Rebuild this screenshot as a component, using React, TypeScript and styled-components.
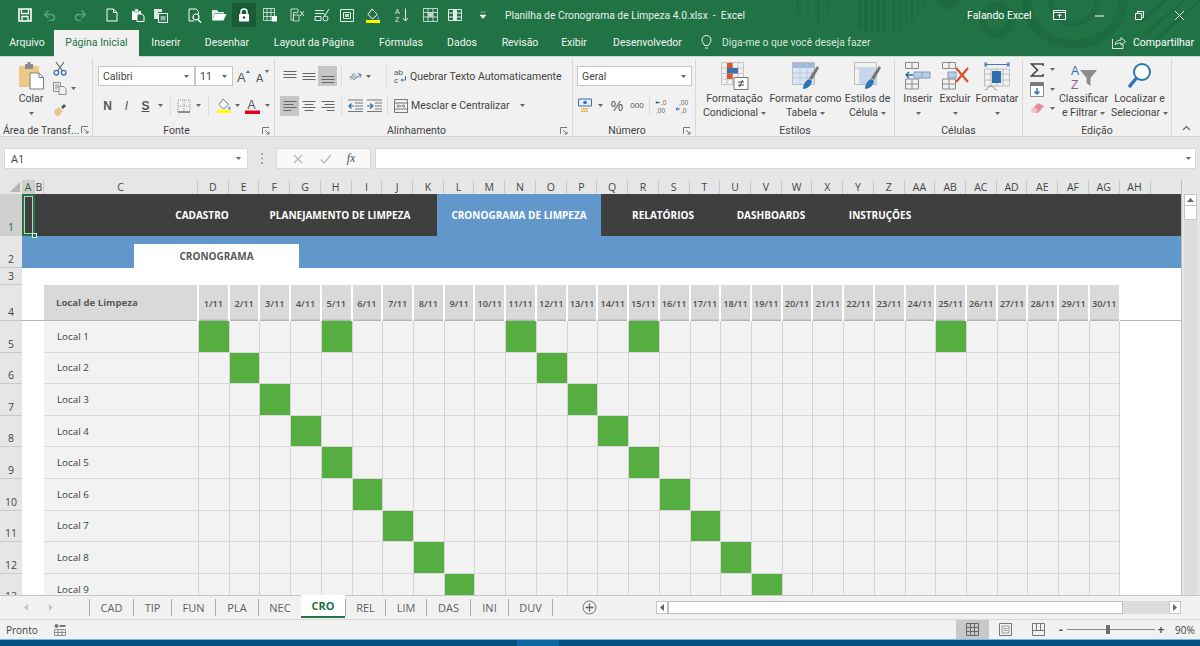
import React from "react";
import styled, { createGlobalStyle } from "styled-components";

const GlobalStyle = createGlobalStyle`
  html, body { margin: 0; padding: 0; background: #e6e6e6; }
  body { width: 1200px; height: 646px; overflow: hidden; font-family: "Open Sans", "Liberation Sans", sans-serif; }
`;

const Page = styled.div`
  width: 1200px;
  height: 646px;
  display: flex;
  flex-direction: column;
  overflow: hidden;
`;

/* ---------- title bar ---------- */
const Head = styled.div`
  position: relative;
  z-index: 1;
  height: 56px;
  flex: none;
  background: #217346;
  color: #fff;
  font-family: "Roboto", "Open Sans", sans-serif;
  font-size: 10.5px;
`;
const Pattern = styled.svg`
  position: absolute;
  right: 0;
  top: 0;
`;
const TitleRow = styled.div`
  position: relative;
  height: 30px;
  display: flex;
  align-items: center;
  padding-left: 15px;
`;
const Qat = styled.div<{ $w?: number; $ml?: number; $on?: boolean }>`
  width: ${(p) => p.$w || 20}px;
  margin-left: ${(p) => p.$ml || 0}px;
  height: 24px;
  display: flex;
  align-items: center;
  justify-content: center;
  flex: none;
  background: ${(p) => (p.$on ? "#1a5c38" : "transparent")};
`;
const DocTitle = styled.div`
  width: 474px;
  flex: none;
  box-sizing: border-box;
  padding-left: 12px;
  color: #e6f1ea;
  font-size: 10.3px;
  white-space: pre;
`;
const UserName = styled.div`
  width: 68px;
  flex: none;
`;
const WinBtn = styled.div<{ $w: number }>`
  width: ${(p) => p.$w}px;
  flex: none;
  display: flex;
  justify-content: center;
`;
const TabRow = styled.div`
  position: relative;
  height: 26px;
  display: flex;
  align-items: flex-start;
`;
const RibbonTab = styled.div<{ $w: number; $on?: boolean }>`
  width: ${(p) => p.$w}px;
  height: ${(p) => (p.$on ? 27 : 26)}px;
  line-height: 25px;
  text-align: center;
  white-space: nowrap;
  flex: none;
  color: ${(p) => (p.$on ? "#217346" : "#eef5f0")};
  background: ${(p) => (p.$on ? "#f1f1f1" : "transparent")};
`;
const TellMe = styled.div`
  width: 414px;
  flex: none;
  display: flex;
  align-items: center;
  gap: 10px;
  height: 25px;
  padding-left: 3px;
  box-sizing: border-box;
  color: #d6e6dc;
  font-size: 10.3px;
`;
const Share = styled.div`
  display: flex;
  align-items: center;
  gap: 7px;
  height: 25px;
`;

/* ---------- ribbon ---------- */
const Ribbon = styled.div`
  height: 81px;
  flex: none;
  display: flex;
  background: #f1f1f1;
  border-top: 1px solid #c5dfcf;
  border-bottom: 1px solid #d2d2d2;
  box-sizing: border-box;
  color: #444;
  font-family: "Roboto", "Open Sans", sans-serif;
  font-size: 10.5px;
`;
const Group = styled.div<{ $w: number }>`
  width: ${(p) => p.$w}px;
  flex: none;
  display: flex;
  flex-direction: column;
  box-sizing: border-box;
  margin-top: 2px;
  border-right: 1px solid #d8d8d8;
`;
const GroupBody = styled.div`
  flex: 1;
  display: flex;
  min-height: 0;
`;
const GroupLabel = styled.div<{ $launch?: boolean }>`
  height: 12px;
  flex: none;
  display: grid;
  grid-template-columns: 1fr auto 1fr;
  align-items: center;
  padding-right: ${(p) => (p.$launch ? 14 : 0)}px;
  white-space: nowrap;
`;
const ClipLabel = styled.div`
  height: 12px;
  flex: none;
  display: flex;
  align-items: center;
  justify-content: space-between;
  padding: 0 3px;
  white-space: nowrap;
`;
const LabelText = styled.span`
  grid-column: 2;
`;
const Launcher = styled.svg`
  grid-column: 3;
  justify-self: end;
  margin-right: -10px;
  flex: none;
`;
const ClipLauncher = styled(Launcher)`
  margin-right: 0;
`;
const Stack = styled.div<{ $w?: number; $pad?: string }>`
  display: flex;
  flex-direction: column;
  width: ${(p) => (p.$w ? p.$w + "px" : "auto")};
  padding: ${(p) => p.$pad || "0"};
  box-sizing: border-box;
  flex: none;
`;
const Row = styled.div<{ $h?: number }>`
  display: flex;
  align-items: center;
  height: ${(p) => p.$h || 27}px;
  flex: none;
`;
const LowerRow = styled(Row)`
  box-sizing: border-box;
  height: 32px;
  padding-top: 7px;
`;
const Tool = styled.div<{ $w?: number; $on?: boolean }>`
  width: ${(p) => p.$w || 19}px;
  height: 20px;
  flex: none;
  display: flex;
  align-items: center;
  justify-content: center;
  background: ${(p) => (p.$on ? "#c6c6c6" : "transparent")};
`;
const Sep = styled.div<{ $mx?: number; $ml?: number }>`
  width: 1px;
  height: 20px;
  flex: none;
  margin: 0 ${(p) => p.$mx ?? 4}px 0 ${(p) => p.$ml ?? p.$mx ?? 4}px;
  background: #dcdcdc;
`;
const Combo = styled.div<{ $w: number }>`
  width: ${(p) => p.$w}px;
  height: 20px;
  flex: none;
  box-sizing: border-box;
  background: #fff;
  border: 1px solid #c6c6c6;
  padding: 0 5px 0 4px;
  display: flex;
  align-items: center;
  justify-content: space-between;
`;
const Big = styled.div<{ $w: number; $pl?: number }>`
  width: ${(p) => p.$w}px;
  margin-left: ${(p) => p.$pl || 0}px;
  flex: none;
  display: flex;
  flex-direction: column;
  align-items: center;
  text-align: center;
  line-height: 14px;
  white-space: nowrap;
`;
const BigIcon = styled.div`
  height: 33px;
  flex: none;
  padding-top: 3px;
  box-sizing: border-box;
`;
const CaretLine = styled.div`
  height: 14px;
  flex: none;
  display: flex;
  align-items: center;
  justify-content: center;
  gap: 3px;
`;
const TextTool = styled.div<{ $ml?: number }>`
  display: flex;
  align-items: center;
  gap: 3px;
  margin-left: ${(p) => p.$ml || 0}px;
  white-space: nowrap;
  height: 20px;
`;
const CaretGap = styled.span<{ $w: number }>`
  width: ${(p) => p.$w}px;
  flex: none;
`;
const Glyph = styled.span<{ $bold?: boolean; $italic?: boolean; $under?: boolean; $size?: number }>`
  font-family: "Liberation Sans", sans-serif;
  font-weight: ${(p) => (p.$bold ? 700 : 400)};
  font-style: ${(p) => (p.$italic ? "italic" : "normal")};
  text-decoration: ${(p) => (p.$under ? "underline" : "none")};
  font-size: ${(p) => p.$size || 11}px;
  color: #555;
`;
const Collapse = styled.div`
  flex: 1;
  display: flex;
  align-items: flex-end;
  justify-content: center;
  padding: 0 0 5px;
`;

/* ---------- formula bar ---------- */
const FormulaBar = styled.div`
  height: 43px;
  flex: none;
  background: #e6e6e6;
  display: flex;
  align-items: flex-start;
  padding: 11px 4px 0;
  box-sizing: border-box;
  font-family: "Open Sans", sans-serif;
  font-size: 11px;
  color: #444;
`;
const NameBox = styled.div`
  width: 244px;
  height: 21px;
  box-sizing: border-box;
  flex: none;
  background: #fff;
  border: 1px solid #d8d8d8;
  padding: 0 6px;
  display: flex;
  align-items: center;
  justify-content: space-between;
`;
const Dots = styled.div`
  width: 28px;
  height: 21px;
  flex: none;
  display: flex;
  justify-content: center;
  align-items: center;
`;
const FxBox = styled.div`
  width: 95px;
  height: 21px;
  flex: none;
  box-sizing: border-box;
  background: #f8f8f8;
  border: 1px solid #d8d8d8;
  display: flex;
  align-items: center;
  justify-content: space-around;
  padding: 0 7px;
  margin-right: 4px;
`;
const FxText = styled.span`
  font-family: "Liberation Serif", serif;
  font-style: italic;
  font-size: 12px;
  color: #555;
`;
const FormulaInput = styled.div`
  flex: 1;
  height: 21px;
  box-sizing: border-box;
  background: #fff;
  border: 1px solid #d8d8d8;
  display: flex;
  justify-content: flex-end;
  align-items: center;
  padding-right: 4px;
`;

/* ---------- sheet ---------- */
const SheetArea = styled.div`
  height: 415px;
  flex: none;
  display: flex;
  background: #fff;
  overflow: hidden;
`;
const SheetGrid = styled.div`
  width: 1181px;
  flex: none;
  display: grid;
  grid-template-columns: 22px 13px 9px 154px repeat(30, 30.73px) 31px 1fr;
  grid-template-rows: 14px 42px 32px 17px 36px repeat(9, 31.62px);
  border-right: 1px solid #bdbdbd;
  box-sizing: content-box;
  font-family: "Open Sans", sans-serif;
  overflow: hidden;
`;
const Corner = styled.div`
  background: #e6e6e6;
  display: flex;
  align-items: flex-end;
  justify-content: flex-end;
  padding: 0 2px 2px 0;
  box-sizing: border-box;
`;
const ColHead = styled.div<{ $on?: boolean; $plain?: boolean }>`
  background: ${(p) => (p.$on ? "#cfcfcf" : "#e6e6e6")};
  border-right: ${(p) => (p.$plain ? "none" : "1px solid #c9c9c9")};
  box-sizing: border-box;
  font-size: 10.5px;
  line-height: 14px;
  text-align: center;
  color: ${(p) => (p.$on ? "#1e6b41" : "#444")};
`;
const RowHead = styled.div<{ $on?: boolean }>`
  grid-column: 1;
  background: ${(p) => (p.$on ? "#cfcfcf" : "#e6e6e6")};
  border-bottom: 1px solid #c9c9c9;
  box-sizing: border-box;
  display: flex;
  align-items: flex-end;
  justify-content: center;
  font-size: 10.5px;
  line-height: 15px;
  color: ${(p) => (p.$on ? "#1e6b41" : "#444")};
`;
const Selected = styled.div`
  position: relative;
  background: #3f3f3f;
  border: 2px solid #217346;
  box-sizing: border-box;
  outline: 1px solid #b9d2c4;
  outline-offset: -3px;
  &::after {
    content: "";
    position: absolute;
    right: -4px;
    bottom: -4px;
    width: 3px;
    height: 3px;
    background: #217346;
    border: 1px solid #e8f0eb;
  }
`;
const TopNav = styled.div`
  grid-column: 3 / -1;
  background: #3f3f3f;
  display: flex;
  padding-left: 126px;
`;
const NavItem = styled.div<{ $w: number; $on?: boolean }>`
  width: ${(p) => p.$w}px;
  flex: none;
  display: flex;
  align-items: center;
  justify-content: center;
  white-space: nowrap;
  color: #fff;
  font-weight: 700;
  font-size: 10px;
  background: ${(p) => (p.$on ? "#6297cc" : "transparent")};
`;
const SubNav = styled.div`
  grid-column: 2 / -1;
  background: #6297cc;
  display: flex;
  align-items: flex-end;
  padding-left: 112px;
`;
const SubTab = styled.div`
  width: 165px;
  height: 24px;
  background: #fff;
  display: flex;
  align-items: center;
  justify-content: center;
  color: #595959;
  font-weight: 700;
  font-size: 10px;
`;
const BlankRow = styled.div`
  grid-column: 2 / -1;
`;
const Gutter = styled.div<{ $line?: boolean }>`
  grid-column: span 2;
  border-bottom: ${(p) => (p.$line ? "1.5px solid #b5b5b5" : "none")};
  box-sizing: border-box;
`;
const HeadLabel = styled.div`
  background: #d9d9d9;
  margin-right: 1px;
  display: flex;
  align-items: center;
  padding-left: 12px;
  color: #595959;
  font-weight: 700;
  font-size: 9.6px;
  white-space: nowrap;
  border-bottom: 1.5px solid #b5b5b5;
  box-sizing: border-box;
`;
const DateHead = styled.div`
  background: #d9d9d9;
  background-clip: padding-box;
  border-left: 1px solid #fff;
  border-right: 1px solid #fff;
  box-sizing: border-box;
  display: flex;
  align-items: center;
  justify-content: center;
  color: #505050;
  font-weight: 600;
  font-size: 9.2px;
  white-space: nowrap;
  box-shadow: inset 0 -1.5px 0 #b5b5b5;
`;
const RowEnd = styled.div<{ $line?: boolean }>`
  grid-column: span 2;
  border-bottom: ${(p) => (p.$line ? "1.5px solid #b5b5b5" : "none")};
  box-sizing: border-box;
`;
const PlaceCell = styled.div`
  background: #f2f2f2;
  border-bottom: 1px solid #d9d9d9;
  box-sizing: border-box;
  display: flex;
  align-items: center;
  padding-left: 13px;
  color: #404040;
  font-size: 9.8px;
`;
const DayCell = styled.div<{ $done?: boolean }>`
  background: ${(p) => (p.$done ? "#55ae3f" : "#f2f2f2")};
  border-left: 1px solid #d4d4d4;
  border-bottom: 1px solid #d9d9d9;
  box-sizing: border-box;
`;
const LastDay = styled(DayCell)`
  border-right: 1px solid #d4d4d4;
`;
const VScroll = styled.div`
  flex: 1;
  display: flex;
  flex-direction: column;
  background: #e6e6e6;
  padding: 14px 3px 0 2px;
  box-sizing: border-box;
  height: 415px;
`;
const ScrollBtn = styled.div`
  height: 12px;
  flex: none;
  background: #fff;
  border: 1px solid #c6c6c6;
  box-sizing: border-box;
  display: flex;
  align-items: center;
  justify-content: center;
`;
const VThumb = styled.div`
  height: 14px;
  flex: none;
  background: #fff;
  border: 1px solid #c6c6c6;
  border-top: none;
  box-sizing: border-box;
`;
const VTrack = styled.div`
  flex: 1;
  background: #dcdcdc;
`;

/* ---------- sheet tabs ---------- */
const TabBar = styled.div`
  height: 25px;
  flex: none;
  display: flex;
  align-items: flex-start;
  background: #f1f1f1;
  border-top: 1px solid #c6c6c6;
  border-bottom: 1px solid #d8d8d8;
  box-sizing: border-box;
  font-family: "Open Sans", sans-serif;
  font-size: 11px;
  color: #555;
`;
const TabNav = styled.div`
  width: 89px;
  height: 22px;
  flex: none;
  display: flex;
  align-items: center;
  gap: 18px;
  padding-left: 23px;
  box-sizing: border-box;
`;
const SheetTab = styled.div<{ $w: number; $on?: boolean }>`
  width: ${(p) => p.$w}px;
  flex: none;
  box-sizing: border-box;
  height: ${(p) => (p.$on ? 23 : 17)}px;
  margin-top: ${(p) => (p.$on ? "-1px" : "3px")};
  display: flex;
  align-items: center;
  justify-content: center;
  border-left: ${(p) => (p.$on ? "none" : "1px solid #a8a8a8")};
  background: ${(p) => (p.$on ? "#fff" : "transparent")};
  color: ${(p) => (p.$on ? "#217346" : "#5f5f5f")};
  font-weight: ${(p) => (p.$on ? 700 : 400)};
  border-bottom: ${(p) => (p.$on ? "2px solid #217346" : "none")};
`;
const TabEnd = styled.div`
  width: 1px;
  height: 17px;
  margin-top: 3px;
  flex: none;
  background: #a8a8a8;
`;
const AddSheet = styled.div`
  width: 103px;
  height: 22px;
  flex: none;
  display: flex;
  align-items: center;
  padding-left: 29px;
  box-sizing: border-box;
`;
const HScroll = styled.div`
  width: 525px;
  height: 13px;
  margin-top: 5px;
  flex: none;
  display: flex;
`;
const HBtn = styled.div`
  width: 12px;
  flex: none;
  background: #fff;
  border: 1px solid #c6c6c6;
  box-sizing: border-box;
  display: flex;
  align-items: center;
  justify-content: center;
`;
const HThumb = styled.div`
  width: 455px;
  flex: none;
  background: #fff;
  border: 1px solid #bdbdbd;
  box-sizing: border-box;
`;
const HTrack = styled.div`
  flex: 1;
  background: #dcdcdc;
`;

/* ---------- status + taskbar ---------- */
const StatusBar = styled.div`
  height: 19px;
  flex: none;
  display: flex;
  align-items: center;
  background: #f1f1f1;
  padding-left: 6px;
  font-family: "Open Sans", sans-serif;
  font-size: 10px;
  color: #444;
`;
const Ready = styled.div`
  width: 48px;
`;
const StatusFill = styled.div`
  flex: 1;
`;
const ViewBtn = styled.div<{ $on?: boolean }>`
  width: 33px;
  height: 19px;
  flex: none;
  display: flex;
  align-items: center;
  justify-content: center;
  background: ${(p) => (p.$on ? "#c8c8c8" : "transparent")};
`;
const Zoom = styled.div`
  width: 145px;
  display: flex;
  align-items: center;
  padding-left: 1px;
  box-sizing: border-box;
`;
const ZoomMark = styled.div`
  width: 10px;
  text-align: center;
  font-size: 12px;
  font-weight: 700;
  color: #555;
  line-height: 12px;
`;
const Slider = styled.div`
  position: relative;
  width: 88px;
  height: 1px;
  background: #8a8a8a;
  margin: 0 1px;
  &::after {
    content: "";
    position: absolute;
    left: 39px;
    top: -4px;
    width: 4px;
    height: 9px;
    background: #6e6e6e;
  }
`;
const ZoomValue = styled.div`
  margin-left: 9px;
`;
const Taskbar = styled.div`
  flex: 1;
  background: #02507f;
  border-top: 1px solid #7fb4d6;
  box-sizing: border-box;
  display: flex;
  padding-left: 517px;
`;
const TaskItem = styled.div`
  width: 42px;
  background: #0a66a4;
`;

/* ---------- icons ---------- */
type IconProps = { c?: string };
const IconSvg = styled.svg`
  display: block;
  flex: none;
`;
const Svg = ({ w = 16, h = 16, children }: { w?: number; h?: number; children: React.ReactNode }) => (
  <IconSvg width={w} height={h} viewBox={`0 0 ${w} ${h}`} fill="none">
    {children}
  </IconSvg>
);
const Caret = ({ c = "#666" }: IconProps) => (
  <Svg w={5} h={3}>
    <path d="M0 0h5L2.500 3z" fill={c} />
  </Svg>
);
const launchPath = "M.5 7V.5H7M3 3l4 4M7 4.500V7H4.500";
const LaunchIcon = () => (
  <Launcher width="8" height="8" viewBox="0 0 8 8" fill="none">
    <path d={launchPath} stroke="#777" />
  </Launcher>
);
const SaveIcon = () => (
  <Svg w={14} h={14}>
    <path d="M1 1h12v12H1z" stroke="#fff" strokeWidth="1.6" />
    <path d="M3.500 1v4.500h7V1M4 13V8.500h6V13" stroke="#fff" strokeWidth="1.3" />
  </Svg>
);
const UndoIcon = ({ flip }: { flip?: boolean }) => (
  <Svg w={14} h={12}>
    <g transform={flip ? "matrix(-1 0 0 1 14 0)" : undefined} stroke="#5fa07c" strokeWidth="1.6">
      <path d="M2 5.500h6.500a3 3 0 0 1 0 6H6" />
      <path d="M5.500 1.500 1.700 5.500l3.800 3.500" />
    </g>
  </Svg>
);
const NewIcon = () => (
  <Svg w={12} h={14}>
    <path d="M1 1h6.500L11 4.500V13H1z" stroke="#fff" />
    <path d="M7.500 1v3.500H11" stroke="#fff" />
  </Svg>
);
const PasteSmall = () => (
  <Svg w={14} h={14}>
    <path d="M1 3h9v9H1z" fill="#fff" />
    <path d="M3.500 1h4v3h-4z" fill="#fff" stroke="#217346" strokeWidth=".6" />
    <path d="M6 6h5l2 2v5.500H6z" fill="#217346" stroke="#fff" />
  </Svg>
);
const PasteSpecial = () => (
  <Svg w={15} h={15}>
    <path d="M1 1h8v3H5v7H1z" fill="#dfe9e3" />
    <path d="M5.500 5.500h9v9h-9z" stroke="#fff" />
    <path d="M7.500 8h5v4.500h-5z" fill="#8fbaa2" />
  </Svg>
);
const PreviewIcon = () => (
  <Svg w={14} h={15}>
    <path d="M1 1h7l2.500 2.500V6M1 1v12h5" stroke="#fff" />
    <circle cx="8" cy="9" r="3" stroke="#fff" strokeWidth="1.2" />
    <path d="m10 11.500 3 3" stroke="#fff" strokeWidth="1.5" />
  </Svg>
);
const OpenIcon = () => (
  <Svg w={16} h={12}>
    <path d="M1 3V1h5l1.500 2H13v1.500H4L1 11z" fill="#dfe9e3" />
    <path d="M1 11.500h11.500L15.500 5H4z" fill="#fff" />
  </Svg>
);
const LockIcon = () => (
  <Svg w={12} h={14}>
    <path d="M3 6V4a3 3 0 0 1 6 0v2" stroke="#fff" strokeWidth="1.5" />
    <path d="M1 6h10v7.500H1z" fill="#fff" />
    <circle cx="6" cy="9.500" r="1.300" fill="#1a5c38" />
  </Svg>
);
const GridLock = () => (
  <Svg w={15} h={14}>
    <path d="M.5.500h11v12H.5zM.5 4.500h11M.5 8.500h11M4 .5v12M8 .5v12" stroke="#e3eee8" strokeWidth=".8" />
    <path d="M9 8h5v5.500H9z" fill="#fff" />
  </Svg>
);
const FormulaX = () => (
  <Svg w={15} h={14}>
    <path d="M1 1h7v3.500H3.500V12H1zM3.500 7H9v6H3.500z" stroke="#e3eee8" strokeWidth=".8" />
    <path d="m10 3 4 5m0-5-4 5" stroke="#e3eee8" />
  </Svg>
);
const CheckForm = () => (
  <Svg w={16} h={14}>
    <path d="M1 2.500h9M1 5.500h8M1 8.500h6v4H1z" stroke="#e3eee8" />
    <path d="m9 5 2 2.500L15 1" stroke="#e3eee8" />
    <circle cx="11.500" cy="10.500" r="2.500" stroke="#e3eee8" />
  </Svg>
);
const FrameIcon = () => (
  <Svg w={14} h={13}>
    <path d="M.5.500h13v12H.5z" stroke="#e3eee8" />
    <path d="M3.500 3.500h7v6h-7z" stroke="#e3eee8" />
    <path d="M5 5h4v3H5z" fill="#bcd5c7" />
  </Svg>
);
const FillIcon = ({ stroke = "#fff" }: { stroke?: string }) => (
  <Svg w={16} h={15}>
    <path d="m7 1 5.500 5.500L7.500 11 3 6.500z" fill={stroke === "#fff" ? "none" : "#fff"} stroke={stroke} />
    <path d="M13 8c1 1.300 1.500 2 1.500 2.600a1.100 1.100 0 0 1-2.200 0c0-.6.300-1.300.7-2.600z" fill="#5d8fc9" />
    <path d="M1 12h14v3H1z" fill="#ffff00" />
  </Svg>
);
const SortIcon = () => (
  <Svg w={16} h={18}>
    <text x="0" y="8" fontSize="7" fill="#e3eee8" fontFamily="Liberation Sans">A</text>
    <text x="0" y="16" fontSize="7" fill="#e3eee8" fontFamily="Liberation Sans">Z</text>
    <path d="M10.500 2.500v12M8 12l2.500 3 2.500-3" stroke="#e3eee8" />
  </Svg>
);
const ChartGrid = () => (
  <Svg w={15} h={14}>
    <path d="M.5.500h14v13H.5zM.5 4.500h14M.5 9h14M5 .5v13M10 .5v13" stroke="#e3eee8" strokeWidth=".8" />
    <path d="M5 4.500h5V9H5z" fill="#bcd5c7" />
  </Svg>
);
const PanelsIcon = () => (
  <Svg w={14} h={12}>
    <path d="M.5.500h13v11H.5zM.5 4h13M.5 8h13" stroke="#e3eee8" />
    <path d="M5 .5h4v11H5z" fill="#e3eee8" />
  </Svg>
);
const CustomizeQat = () => (
  <Svg w={6} h={8}>
    <path d="M.5 1h5M0 4h6L3 7.500z" fill="#fff" stroke="#fff" strokeWidth=".5" />
  </Svg>
);
const RibbonDisplay = () => (
  <Svg w={13} h={10}>
    <path d="M.5.500h12v9H.5z" stroke="#fff" />
    <path d="M.5.500h12v2H.5zM6.500 8V4M4.500 6l2-2 2 2" stroke="#fff" />
  </Svg>
);
const WinIcon = ({ kind }: { kind: string }) => (
  <Svg w={11} h={11}>
    {kind === "min" && <path d="M1 6h9" stroke="#fff" />}
    {kind === "max" && <path d="M1.500 3.500h6v6h-6zM3.500 3.500v-2h6v6h-2" stroke="#fff" />}
    {kind === "close" && <path d="m1 1 9 9m0-9-9 9" stroke="#dfeee5" />}
  </Svg>
);
const BulbIcon = () => (
  <Svg w={11} h={15}>
    <path d="M3.500 10.500C3 8.500 1 7.500 1 5a4.500 4.500 0 0 1 9 0c0 2.500-2 3.500-2.500 5.500zM4 13h3" stroke="#eef5f0" />
  </Svg>
);
const ShareIcon = () => (
  <Svg w={14} h={13}>
    <path d="M.5 3v9.500H11V8M3 8.500C3.500 5.500 6 4 9 4V1.500L13.500 5.500 9 9V7c-2 0-4.500.5-6 1.500z" stroke="#eef5f0" strokeWidth=".9" />
  </Svg>
);
const PasteBig = () => (
  <Svg w={27} h={28}>
    <path d="M1 4h20v21H1z" fill="#edc987" />
    <path d="M7 2h8v5H7z" fill="#8a8a8a" />
    <path d="M9.500 0h3v3h-3z" fill="#8a8a8a" />
    <path d="M12 11h9l4.500 4.500V27H12z" fill="#fff" stroke="#7a7a7a" />
    <path d="M21 11v4.500h4.500" stroke="#7a7a7a" />
  </Svg>
);
const ScissorsIcon = () => (
  <Svg w={14} h={15}>
    <path d="M3 1l6.500 9M11 1 4.500 10" stroke="#666" strokeWidth="1.200" />
    <circle cx="3.300" cy="11.700" r="2.300" stroke="#3f6fa8" strokeWidth="1.300" />
    <circle cx="10.700" cy="11.700" r="2.300" stroke="#3f6fa8" strokeWidth="1.300" />
  </Svg>
);
const CopyIcon = () => (
  <Svg w={14} h={13}>
    <path d="M.5.500h7v9h-7zM2 3h4M2 5h4M2 7h2" stroke="#777" strokeWidth=".8" />
    <path d="M6 4.500h5l2 2v6H6z" fill="#f1f1f1" stroke="#777" strokeWidth=".8" />
  </Svg>
);
const BrushIcon = () => (
  <Svg w={14} h={13}>
    <path d="m1 8 5-4 4 4-4 5H3z" fill="#e5c68a" />
    <path d="m8 4 3-3 2 2-3 3z" fill="#555" />
  </Svg>
);
const GrowFont = ({ up }: { up?: boolean }) => (
  <Svg w={14} h={18}>
    <text x="0" y="15" fontSize={up ? 13 : 11} fill="#555" fontFamily="Liberation Sans">A</text>
    <path d={up ? "M9 6l2-3 2 3z" : "M9 3h4l-2 3z"} fill="#3f6fa8" />
  </Svg>
);
const BordersIcon = () => (
  <Svg w={14} h={14}>
    <path d="M1 1h12v12H1zM1 7h12M7 1v12" stroke="#999" strokeDasharray="1 1" />
    <path d="M1 13h12" stroke="#444" />
  </Svg>
);
const FontColor = () => (
  <Svg w={15} h={16}>
    <text x="2.500" y="11" fontSize="12" fill="#555" fontFamily="Liberation Sans">A</text>
    <path d="M0 12.500h15V16H0z" fill="#e3001b" />
  </Svg>
);
const AlignIcon = ({ ys, widths = [13, 13, 13], anchor = "l" }: { ys: number[]; widths?: number[]; anchor?: string }) => (
  <Svg w={14} h={14}>
    {ys.map((y, i) => {
      const w = widths[i];
      const x = anchor === "l" ? 0.5 : anchor === "r" ? 13.5 - w : 7 - w / 2;
      return <path key={i} d={`M${x} ${y}h${w}`} stroke="#666" />;
    })}
  </Svg>
);
const OrientIcon = () => (
  <Svg w={18} h={20}>
    <text x="3" y="12" fontSize="6.500" fill="#777" fontFamily="Liberation Sans" transform="rotate(-35 7 10)">ab</text>
    <path d="M7 14l7-5M12 7.500l3 1-1 3" stroke="#3f6fa8" />
  </Svg>
);
const IndentIcon = ({ flip }: { flip?: boolean }) => (
  <Svg w={15} h={13}>
    <path d={flip ? "M0 1h15M8 4h7M8 7h7M8 10h7M0 12.500h15" : "M0 1h15M7 4h8M7 7h8M7 10h8M0 12.500h15"} stroke="#777" />
    <path d={flip ? "M0 7h5M3 4.500 6 7 3 9.500" : "M6 7H1M3.500 4.500 1 7l2.500 2.500"} stroke="#2a6db5" strokeWidth="1.200" />
  </Svg>
);
const WrapIcon = () => (
  <Svg w={13} h={18}>
    <text x="0" y="8" fontSize="8" fill="#555" fontFamily="Liberation Sans">ab</text>
    <text x="0" y="16" fontSize="8" fill="#555" fontFamily="Liberation Sans">c</text>
    <path d="M11.500 9v4H7M8.500 11.500 7 13l1.500 1.500" stroke="#3f6fa8" />
  </Svg>
);
const MergeIcon = () => (
  <Svg w={14} h={14}>
    <path d="M.5.500h13v13H.5zM.5 4h13M.5 10h13" stroke="#777" />
    <path d="M3 7h8M4.500 5.500 3 7l1.500 1.500M9.500 5.500 11 7 9.500 8.500" stroke="#777" />
  </Svg>
);
const CurrencyIcon = () => (
  <Svg w={14} h={15}>
    <path d="M.5 1h13v7H.5z" fill="#e4eef8" stroke="#3f6fa8" />
    <circle cx="7" cy="4.500" r="1.800" fill="#3f6fa8" />
    <path d="M3 10h7v1.500H3zM3 12.500h7V14H3z" fill="#e3b95e" />
  </Svg>
);
const DecimalIcon = ({ more }: { more?: boolean }) => (
  <Svg w={15} h={20}>
    <text x={more ? 4 : 6} y="9" fontSize="6.500" fill="#666" fontFamily="Liberation Sans">{more ? ",00" : ",0"}</text>
    <text x={more ? 6 : 1} y="17" fontSize="6.500" fill="#666" fontFamily="Liberation Sans">{more ? ",0" : ",00"}</text>
    <path d={more ? "M5 13H1M2.500 11.500 1 13l1.500 1.500" : "M5 6.500H1M2.500 5 1 6.500 2.500 8"} stroke="#2a6db5" />
  </Svg>
);
const CondFormat = () => (
  <Svg w={28} h={28}>
    <path d="M.5.500h22v22H.5zM.5 6h22M.5 11.500h22M.5 17h22M6 .5v22M11.500.5v22M17 .5v22" stroke="#c4c4c4" />
    <path d="M6 1h5.500v5H6z" fill="#d65532" />
    <path d="M6 6h11v5.500H6z" fill="#3f6fa8" />
    <path d="M6 11.500h5.500V17H6z" fill="#d65532" />
    <path d="M13 15.500h14v12H13z" fill="#fff" stroke="#777" />
    <path d="M17 20h6M17 23h6M21.500 18 18.500 25" stroke="#444" />
  </Svg>
);
const TableBrush = ({ cell }: { cell?: boolean }) => (
  <Svg w={28} h={28}>
    {cell ? (
      <>
        <path d="M.5.500h22v22H.5zM.5 6h22M6 6v16" stroke="#bdbdbd" />
        <path d="M6 6h16.500v16H6z" fill="#c5d6ea" />
      </>
    ) : (
      <>
        <path d="M.5.500h22v22H.5z" stroke="#bdbdbd" />
        <path d="M1 1h21v5H1z" fill="#9fbad9" />
        <path d="M1 6h21v16H1z" fill="#dce6f1" />
        <path d="M1 11h21M1 16h21M8 1v21M15 1v21" stroke="#b6c6d8" />
      </>
    )}
    <path d="m17 16 8-12 2 2-7 12z" fill="#777" />
    <path d="M11 27c0-5 3-9 6.500-10l2.500 2c-.5 4-4 8-9 8z" fill="#2f75b5" />
  </Svg>
);
const InsertIcon = () => (
  <Svg w={26} h={28}>
    <path d="M.5.500h13v6H.5zM7 .5v6M.5 17h13v10H.5zM7 17v10M.5 22h13" stroke="#8c8c8c" />
    <path d="M9 10h16v6H9z" fill="#b9cde4" stroke="#7c9cc0" />
    <path d="M17 10v6" stroke="#7c9cc0" />
    <path d="M8 13H1M4 10l-3 3 3 3" stroke="#2a6db5" strokeWidth="1.500" />
  </Svg>
);
const DeleteIcon = () => (
  <Svg w={27} h={28}>
    <path d="M.5.500h13v6H.5zM7 .5v6M.5 17h13v10H.5zM7 17v10M.5 22h13" stroke="#8c8c8c" />
    <path d="M6 10h8v6H6z" fill="#b9cde4" stroke="#7c9cc0" />
    <path d="m14 6 12 14m0-14L14 20" stroke="#d9512c" strokeWidth="2.200" />
  </Svg>
);
const FormatCells = () => (
  <Svg w={26} h={29}>
    <path d="M1 2.500h24M3.500.5 1 2.500l2.500 2M22.500.5l2.500 2-2.500 2M1 0v5M25 0v5" stroke="#2a6db5" strokeWidth=".9" />
    <path d="M.5 7h25v17H.5zM.5 12h25M.5 18h25M7 7v17M13 7v17M19 7v17" stroke="#bdbdbd" />
    <path d="M8 9h9v12H8z" fill="#2f6fb1" />
    <path d="M1 28c3 0 3-4 6-4s3 4 6 4" stroke="#8c8c8c" />
  </Svg>
);
const SigmaIcon = () => (
  <Svg w={14} h={14}>
    <path d="M13 3V1H1.500L7.500 7 1.500 13H13v-2" stroke="#444" strokeWidth="1.600" />
  </Svg>
);
const FillDown = () => (
  <Svg w={14} h={15}>
    <path d="M.5.500h13v14H.5z" fill="#fff" stroke="#8c8c8c" />
    <path d="M.5.500h13V4H.5z" fill="#777" />
    <path d="M7 6v6M4.500 9.500 7 12l2.500-2.500" stroke="#2a6db5" strokeWidth="1.400" />
  </Svg>
);
const EraserIcon = () => (
  <Svg w={15} h={12}>
    <path d="m1 8 7-7 6 3-6 7H4z" fill="#e58c9b" />
    <path d="m1 8 3-3 4 3-2 3H4z" fill="#f3c1ca" />
  </Svg>
);
const SortFilter = () => (
  <Svg w={28} h={30}>
    <text x="1" y="13" fontSize="12" fill="#2a6db5" fontFamily="Liberation Sans">A</text>
    <text x="1" y="27" fontSize="12" fill="#8e5aa5" fontFamily="Liberation Sans">Z</text>
    <path d="M10 8h17l-6.500 8v8l-4-3v-5z" fill="#8c8c8c" />
  </Svg>
);
const FindIcon = () => (
  <Svg w={25} h={26}>
    <circle cx="15" cy="10" r="8" fill="#fff" stroke="#2f75b5" strokeWidth="2" />
    <path d="M9.500 16 2 25" stroke="#2f75b5" strokeWidth="3.500" />
  </Svg>
);
const ChevronUp = () => (
  <Svg w={9} h={6}>
    <path d="m1 5 3.500-3.500L8 5" stroke="#666" strokeWidth="1.200" />
  </Svg>
);
const CloseGlyph = () => (
  <Svg w={12} h={12}>
    <path d="m2 2 8 8m0-8-8 8" stroke="#bcbcbc" strokeWidth="1.500" />
  </Svg>
);
const CheckGlyph = () => (
  <Svg w={13} h={12}>
    <path d="m1.500 6.500 3.500 3.500 7-8" stroke="#bcbcbc" strokeWidth="1.500" />
  </Svg>
);
const DotsIcon = () => (
  <Svg w={2} h={11}>
    <path d="M0 0h2v2H0zM0 4.500h2v2H0zM0 9h2v2H0z" fill="#a9a9a9" />
  </Svg>
);
const SelectAll = () => (
  <Svg w={10} h={10}>
    <path d="M10 0v10H0z" fill="#b4b4b4" />
  </Svg>
);
const Tri = ({ dir, c = "#666" }: { dir: "u" | "l" | "r"; c?: string }) => {
  const d = { u: "M0 4h7L3.500 0z", l: "M5 0v7L1 3.500z", r: "M1 0v7l4-3.500z" }[dir];
  return (
    <Svg w={7} h={dir === "u" ? 4 : 7}>
      <path d={d} fill={c} />
    </Svg>
  );
};
const AddIcon = () => (
  <Svg w={15} h={15}>
    <circle cx="7.500" cy="7.500" r="6.500" stroke="#777" />
    <path d="M7.500 3.500v8M3.500 7.500h8" stroke="#666" strokeWidth="1.300" />
  </Svg>
);
const CellModeIcon = () => (
  <Svg w={12} h={12}>
    <circle cx="2.500" cy="2" r="2" fill="#777" />
    <path d="M5.500 1h6v2h-6z" fill="#777" />
    <path d="M.5 5.500h11v6H.5zM.5 8.500h11M4 5.500v6M8 5.500v6" stroke="#777" strokeWidth=".8" />
  </Svg>
);
const NormalView = () => (
  <Svg w={13} h={13}>
    <path d="M.5.500h12v12H.5zM.5 4.500h12M.5 8.500h12M4.500.5v12M8.500.5v12" stroke="#666" />
  </Svg>
);
const PageView = () => (
  <Svg w={13} h={13}>
    <path d="M.5.500h12v12H.5z" stroke="#777" />
    <path d="M3 3h7v7H3zM4.500 5.500h4M4.500 7.500h4" stroke="#888" strokeWidth=".8" />
  </Svg>
);
const BreakView = () => (
  <Svg w={13} h={13}>
    <path d="M.5.500h12v12H.5zM.5 7.500h12M4.500.5v7M8.500.5v7" stroke="#777" />
  </Svg>
);

const columns = "A B C D E F G H I J K L M N O P Q R S T U V W X Y Z AA AB AC AD AE AF AG AH".split(" ");
const days = Array.from({ length: 30 }, (_, i) => i + 1);
const schedule: number[][] = [
  [1, 5, 11, 15, 25],
  [2, 12],
  [3, 13],
  [4, 14],
  [5, 15],
  [6, 16],
  [7, 17],
  [8, 18],
  [9, 19],
];
const navItems = [
  { label: "CADASTRO", w: 82 },
  { label: "PLANEJAMENTO DE LIMPEZA", w: 194 },
  { label: "CRONOGRAMA DE LIMPEZA", w: 164, on: true },
  { label: "RELATÓRIOS", w: 124 },
  { label: "DASHBOARDS", w: 92 },
  { label: "INSTRUÇÕES", w: 126 },
];
const ribbonTabs = [
  { label: "Arquivo", w: 54 },
  { label: "Página Inicial", w: 85, on: true },
  { label: "Inserir", w: 54 },
  { label: "Desenhar", w: 68 },
  { label: "Layout da Página", w: 106 },
  { label: "Fórmulas", w: 68 },
  { label: "Dados", w: 54 },
  { label: "Revisão", w: 62 },
  { label: "Exibir", w: 46 },
  { label: "Desenvolvedor", w: 101 },
];
const sheetTabs = [
  { label: "CAD", w: 44 },
  { label: "TIP", w: 38 },
  { label: "FUN", w: 44 },
  { label: "PLA", w: 43 },
  { label: "NEC", w: 43 },
  { label: "CRO", w: 44, on: true },
  { label: "REL", w: 40 },
  { label: "LIM", w: 41 },
  { label: "DAS", w: 44 },
  { label: "INI", w: 38 },
  { label: "DUV", w: 44 },
];
const rowNumbers = [5, 6, 7, 8, 9, 10, 11, 12, 13];

const TitlePattern = () => (
  <Pattern width="420" height="56" viewBox="0 0 420 56" fill="none">
    <g stroke="#1e6a41">
      <path d="M18 0v14M28 0v18M38 0v26M48 0v12" strokeWidth="1.500" />
      <path d="M80 0v30M86 0v32M92 0v32M98 0v32M104 0v32" strokeWidth="3.500" />
      <path d="M114 0v32M120 0v30M126 0v26M132 0v22M138 0v16M144 0v10" strokeWidth="2" />
    </g>
    <circle cx="168" cy="-2" r="11" fill="#1e6a41" />
    <circle cx="217" cy="20" r="14" stroke="#1e6a41" strokeWidth="8" />
    <path d="M246 0c2 28 22 44 48 44s46-16 50-44" stroke="#1e6a41" strokeWidth="9" />
    <path d="M270 0c2 14 12 24 24 24s22-10 24-24" stroke="#1e6a41" strokeWidth="5" />
    <path d="M366 34 404 0M376 40 420 0M360 22 386 0" stroke="#1e6a41" strokeWidth="3" />
  </Pattern>
);

const App = () => (
  <Page>
    <GlobalStyle />
    <Head>
      <TitlePattern />
      <TitleRow>
        <Qat><SaveIcon /></Qat>
        <Qat $ml={5}><UndoIcon /></Qat>
        <Qat $ml={10}><UndoIcon flip /></Qat>
        <Qat $ml={12}><NewIcon /></Qat>
        <Qat $ml={6}><PasteSmall /></Qat>
        <Qat $ml={2}><PasteSpecial /></Qat>
        <Qat $ml={15}><PreviewIcon /></Qat>
        <Qat $ml={4}><OpenIcon /></Qat>
        <Qat $w={24} $ml={3} $on><LockIcon /></Qat>
        <Qat $ml={4}><GridLock /></Qat>
        <Qat $ml={7}><FormulaX /></Qat>
        <Qat $ml={5}><CheckForm /></Qat>
        <Qat $ml={5}><FrameIcon /></Qat>
        <Qat $ml={6}><FillIcon /></Qat>
        <Qat $ml={10}><SortIcon /></Qat>
        <Qat $ml={7}><ChartGrid /></Qat>
        <Qat $ml={5}><PanelsIcon /></Qat>
        <Qat $ml={8}><CustomizeQat /></Qat>
        <DocTitle>Planilha de Cronograma de Limpeza 4.0.xlsx  -  Excel</DocTitle>
        <UserName>Falando Excel</UserName>
        <WinBtn $w={48}><RibbonDisplay /></WinBtn>
        <WinBtn $w={32}><WinIcon kind="min" /></WinBtn>
        <WinBtn $w={48}><WinIcon kind="max" /></WinBtn>
        <WinBtn $w={32}><WinIcon kind="close" /></WinBtn>
      </TitleRow>
      <TabRow>
        {ribbonTabs.map((t) => (
          <RibbonTab key={t.label} $w={t.w} $on={t.on}>{t.label}</RibbonTab>
        ))}
        <TellMe>
          <BulbIcon />
          Diga-me o que você deseja fazer
        </TellMe>
        <Share>
          <ShareIcon />
          Compartilhar
        </Share>
      </TabRow>
    </Head>

    <Ribbon>
      <Group $w={93}>
        <GroupBody>
          <Big $w={44} $pl={9}>
            <BigIcon><PasteBig /></BigIcon>
            <div>Colar</div>
            <CaretLine><Caret /></CaretLine>
          </Big>
          <Stack>
            <Row $h={18}><Tool $w={14}><ScissorsIcon /></Tool></Row>
            <Row $h={22}><Tool $w={14}><CopyIcon /></Tool><CaretGap $w={4} /><Caret /></Row>
            <Row $h={20}><Tool $w={14}><BrushIcon /></Tool></Row>
          </Stack>
        </GroupBody>
        <ClipLabel>
          <span>Área de Transf...</span>
          <ClipLauncher width="8" height="8" viewBox="0 0 8 8" fill="none">
            <path d={launchPath} stroke="#777" />
          </ClipLauncher>
        </ClipLabel>
      </Group>

      <Group $w={182}>
        <GroupBody>
          <Stack $pad="7px 0 0 5px">
            <Row $h={20}>
              <Combo $w={97}>Calibri<Caret /></Combo>
              <Combo $w={38}>11<Caret /></Combo>
              <Tool $w={21}><GrowFont up /></Tool>
              <Tool $w={18}><GrowFont /></Tool>
            </Row>
            <LowerRow>
              <Tool $w={19}><Glyph $bold $size={12}>N</Glyph></Tool>
              <Tool $w={19}><Glyph $italic $size={12}>I</Glyph></Tool>
              <Tool $w={19}><Glyph $under $bold $size={12}>S</Glyph></Tool>
              <Tool $w={11}><Caret /></Tool>
              <Sep $mx={4} />
              <Tool $w={18}><BordersIcon /></Tool>
              <Tool $w={10}><Caret /></Tool>
              <Sep $mx={5} />
              <Tool $w={19}><FillIcon stroke="#777" /></Tool>
              <Tool $w={9}><Caret /></Tool>
              <Tool $w={21}><FontColor /></Tool>
              <Tool $w={9}><Caret /></Tool>
            </LowerRow>
          </Stack>
        </GroupBody>
        <GroupLabel $launch>
          <LabelText>Fonte</LabelText>
          <LaunchIcon />
        </GroupLabel>
      </Group>

      <Group $w={298}>
        <GroupBody>
          <Stack $pad="7px 0 0 5px">
            <Row $h={20}>
              <Tool><AlignIcon ys={[2.5, 5.5, 8.5]} /></Tool>
              <Tool><AlignIcon ys={[4.5, 7.5, 10.5]} /></Tool>
              <Tool $on><AlignIcon ys={[7.5, 10.5, 13.5]} /></Tool>
              <Sep $mx={4} />
              <Tool $w={18}><OrientIcon /></Tool>
              <CaretGap $w={2} />
              <Caret />
              <Sep $mx={4} $ml={15} />
              <TextTool $ml={3}><WrapIcon />Quebrar Texto Automaticamente</TextTool>
            </Row>
            <LowerRow>
              <Tool $on><AlignIcon ys={[2.5, 5.5, 8.5, 11.5]} widths={[13, 10, 13, 8]} /></Tool>
              <Tool><AlignIcon ys={[2.5, 5.5, 8.5, 11.5]} widths={[13, 9, 13, 9]} anchor="c" /></Tool>
              <Tool><AlignIcon ys={[2.5, 5.5, 8.5, 11.5]} widths={[13, 10, 13, 8]} anchor="r" /></Tool>
              <Sep $mx={4} />
              <Tool $w={19}><IndentIcon /></Tool>
              <Tool $w={19}><IndentIcon flip /></Tool>
              <Sep $mx={3} />
              <TextTool $ml={3}><MergeIcon />Mesclar e Centralizar<CaretGap $w={4} /><Caret /></TextTool>
            </LowerRow>
          </Stack>
        </GroupBody>
        <GroupLabel $launch>
          <LabelText>Alinhamento</LabelText>
          <LaunchIcon />
        </GroupLabel>
      </Group>

      <Group $w={123}>
        <GroupBody>
          <Stack $pad="7px 0 0 4px">
            <Row $h={20}><Combo $w={115}>Geral<Caret /></Combo></Row>
            <LowerRow>
              <Tool $w={16}><CurrencyIcon /></Tool>
              <Tool $w={14}><Caret /></Tool>
              <Tool $w={20}><Glyph $size={14}>%</Glyph></Tool>
              <Tool $w={20}><Glyph $size={8}>000</Glyph></Tool>
              <Sep $mx={2} />
              <Tool $w={20}><DecimalIcon /></Tool>
              <Tool $w={20}><DecimalIcon more /></Tool>
            </LowerRow>
          </Stack>
        </GroupBody>
        <GroupLabel $launch>
          <LabelText>Número</LabelText>
          <LaunchIcon />
        </GroupLabel>
      </Group>

      <Group $w={199}>
        <GroupBody>
          <Big $w={69} $pl={4}>
            <BigIcon><CondFormat /></BigIcon>
            <div>Formatação</div>
            <CaretLine>Condicional <Caret /></CaretLine>
          </Big>
          <Big $w={73}>
            <BigIcon><TableBrush /></BigIcon>
            <div>Formatar como</div>
            <CaretLine>Tabela <Caret /></CaretLine>
          </Big>
          <Big $w={51}>
            <BigIcon><TableBrush cell /></BigIcon>
            <div>Estilos de</div>
            <CaretLine>Célula <Caret /></CaretLine>
          </Big>
        </GroupBody>
        <GroupLabel><LabelText>Estilos</LabelText></GroupLabel>
      </Group>

      <Group $w={128}>
        <GroupBody>
          <Big $w={36} $pl={5}>
            <BigIcon><InsertIcon /></BigIcon>
            <div>Inserir</div>
            <CaretLine><Caret /></CaretLine>
          </Big>
          <Big $w={38}>
            <BigIcon><DeleteIcon /></BigIcon>
            <div>Excluir</div>
            <CaretLine><Caret /></CaretLine>
          </Big>
          <Big $w={46}>
            <BigIcon><FormatCells /></BigIcon>
            <div>Formatar</div>
            <CaretLine><Caret /></CaretLine>
          </Big>
        </GroupBody>
        <GroupLabel><LabelText>Células</LabelText></GroupLabel>
      </Group>

      <Group $w={149}>
        <GroupBody>
          <Stack $w={33} $pad="1px 0 0 7px">
            <Row $h={19}><SigmaIcon /><CaretGap $w={6} /><Caret /></Row>
            <Row $h={20}><FillDown /><CaretGap $w={6} /><Caret /></Row>
            <Row $h={18}><EraserIcon /><CaretGap $w={5} /><Caret /></Row>
          </Stack>
          <Big $w={55}>
            <BigIcon><SortFilter /></BigIcon>
            <div>Classificar</div>
            <CaretLine>e Filtrar <Caret /></CaretLine>
          </Big>
          <Big $w={57}>
            <BigIcon><FindIcon /></BigIcon>
            <div>Localizar e</div>
            <CaretLine>Selecionar <Caret /></CaretLine>
          </Big>
        </GroupBody>
        <GroupLabel><LabelText>Edição</LabelText></GroupLabel>
      </Group>

      <Collapse><ChevronUp /></Collapse>
    </Ribbon>

    <FormulaBar>
      <NameBox>A1<Caret /></NameBox>
      <Dots><DotsIcon /></Dots>
      <FxBox><CloseGlyph /><CheckGlyph /><FxText>fx</FxText></FxBox>
      <FormulaInput><Caret /></FormulaInput>
    </FormulaBar>

    <SheetArea>
      <SheetGrid>
        <Corner><SelectAll /></Corner>
        {columns.map((c) => (
          <ColHead key={c} $on={c === "A"}>{c}</ColHead>
        ))}
        <ColHead $plain />

        <RowHead $on>1</RowHead>
        <Selected />
        <TopNav>
          {navItems.map((n) => (
            <NavItem key={n.label} $w={n.w} $on={n.on}>{n.label}</NavItem>
          ))}
        </TopNav>

        <RowHead>2</RowHead>
        <SubNav>
          <SubTab>CRONOGRAMA</SubTab>
        </SubNav>

        <RowHead>3</RowHead>
        <BlankRow />

        <RowHead>4</RowHead>
        <Gutter $line />
        <HeadLabel>Local de Limpeza</HeadLabel>
        {days.map((d) => (
          <DateHead key={d}>{d}/11</DateHead>
        ))}
        <RowEnd $line />

        {schedule.map((done, i) => (
          <React.Fragment key={i}>
            <RowHead>{rowNumbers[i]}</RowHead>
            <Gutter />
            <PlaceCell>Local {i + 1}</PlaceCell>
            {days.map((d) =>
              d === 30 ? (
                <LastDay key={d} $done={done.includes(d)} />
              ) : (
                <DayCell key={d} $done={done.includes(d)} />
              )
            )}
            <RowEnd />
          </React.Fragment>
        ))}
      </SheetGrid>
      <VScroll>
        <ScrollBtn><Tri dir="u" /></ScrollBtn>
        <VThumb />
        <VTrack />
      </VScroll>
    </SheetArea>

    <TabBar>
      <TabNav><Tri dir="l" c="#c4c4c4" /><Tri dir="r" c="#c4c4c4" /></TabNav>
      {sheetTabs.map((t) => (
        <SheetTab key={t.label} $w={t.w} $on={t.on}>{t.label}</SheetTab>
      ))}
      <TabEnd />
      <AddSheet><AddIcon /></AddSheet>
      <HScroll>
        <HBtn><Tri dir="l" /></HBtn>
        <HThumb />
        <HTrack />
        <HBtn><Tri dir="r" /></HBtn>
      </HScroll>
    </TabBar>

    <StatusBar>
      <Ready>Pronto</Ready>
      <CellModeIcon />
      <StatusFill />
      <ViewBtn $on><NormalView /></ViewBtn>
      <ViewBtn><PageView /></ViewBtn>
      <ViewBtn><BreakView /></ViewBtn>
      <Zoom>
        <ZoomMark>-</ZoomMark>
        <Slider />
        <ZoomMark>+</ZoomMark>
        <ZoomValue>90%</ZoomValue>
      </Zoom>
    </StatusBar>
    <Taskbar><TaskItem /></Taskbar>
  </Page>
);

export default App;
